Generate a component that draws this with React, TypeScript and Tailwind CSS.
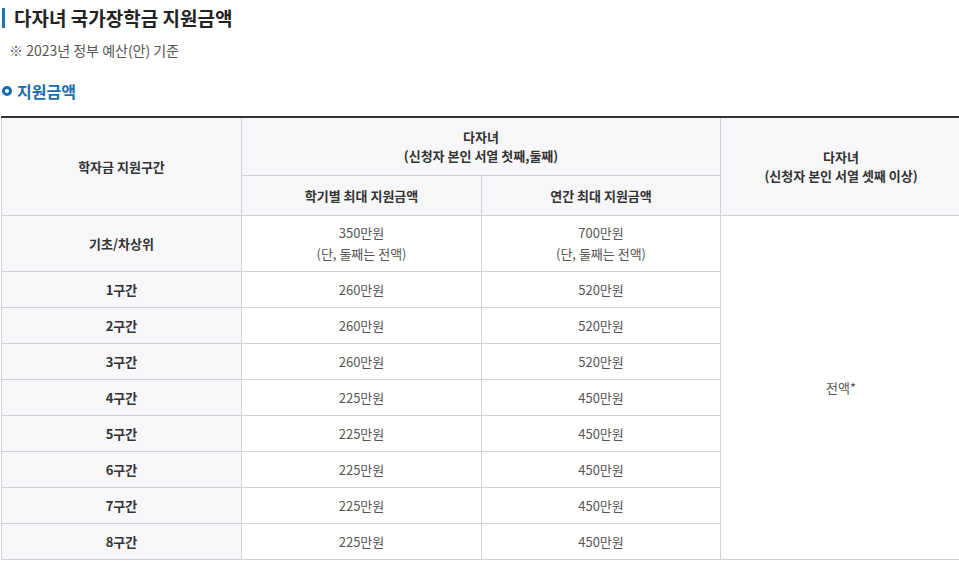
import React from "react";

const rows: [string, string, string][] = [
  ["1구간", "260만원", "520만원"],
  ["2구간", "260만원", "520만원"],
  ["3구간", "260만원", "520만원"],
  ["4구간", "225만원", "450만원"],
  ["5구간", "225만원", "450만원"],
  ["6구간", "225만원", "450만원"],
  ["7구간", "225만원", "450만원"],
  ["8구간", "225만원", "450만원"],
];

const th = "border border-[#d0d0d4] bg-[#f7f7f9] text-[#333] font-bold text-[13px] leading-[19px] text-center align-middle p-0";
const td = "border border-[#d0d0d4] bg-white text-[#555] font-normal text-[13px] leading-[21px] text-center align-middle p-0";

export default function App() {
  return (
    <div className="w-[959px] h-[565px] overflow-hidden bg-white" style={{ fontFamily: '"Noto Sans CJK KR", "Noto Sans", sans-serif' }}>
      <div className="pt-[7px] flex items-center">
        <div className="ml-[2px] w-[3px] h-[20px] bg-[#1a72b8]" />
        <h1 className="ml-[9px] text-[19px] leading-[22px] font-bold text-[#222]">다자녀 국가장학금 지원금액</h1>
      </div>
      <p className="mt-[13px] ml-[9px] text-[14px] leading-[17px] text-[#555]">※ 2023년 정부 예산(안) 기준</p>
      <div className="mt-[22px] flex items-center">
        <span className="ml-[2px] w-[10px] h-[10px] rounded-full border-[3px] border-[#1a6cb0] bg-white" />
        <h2 className="ml-[5px] text-[16px] leading-[20px] font-bold text-[#1a6cb0]">지원금액</h2>
      </div>
      <div className="mt-[15px] pl-[1px]">
        <table className="border-collapse table-fixed w-[960px] border-t-2 border-t-[#333]">
          <colgroup>
            <col className="w-[240px]" />
            <col className="w-[240px]" />
            <col className="w-[239px]" />
            <col className="w-[241px]" />
          </colgroup>
          <thead>
            <tr>
              <th rowSpan={2} className={th + " border-t-2 border-t-[#333]"}>학자금 지원구간</th>
              <th colSpan={2} className={th + " h-[58px] border-t-2 border-t-[#333]"}>
                다자녀
                <br />
                (신청자 본인 서열 첫째,둘째)
              </th>
              <th rowSpan={2} className={th + " border-t-2 border-t-[#333]"}>
                다자녀
                <br />
                (신청자 본인 서열 셋째 이상)
              </th>
            </tr>
            <tr>
              <th className={th + " h-[40px]"}>학기별 최대 지원금액</th>
              <th className={th + " h-[40px]"}>연간 최대 지원금액</th>
            </tr>
          </thead>
          <tbody>
            <tr>
              <th className={th + " h-[56px]"}>기초/차상위</th>
              <td className={td}>
                350만원
                <br />
                (단, 둘째는 전액)
              </td>
              <td className={td}>
                700만원
                <br />
                (단, 둘째는 전액)
              </td>
              <td rowSpan={9} className={td}>전액*</td>
            </tr>
            {rows.map(([a, b, c]) => (
              <tr key={a}>
                <th className={th + " h-[36px]"}>{a}</th>
                <td className={td}>{b}</td>
                <td className={td}>{c}</td>
              </tr>
            ))}
          </tbody>
        </table>
      </div>
    </div>
  );
}
